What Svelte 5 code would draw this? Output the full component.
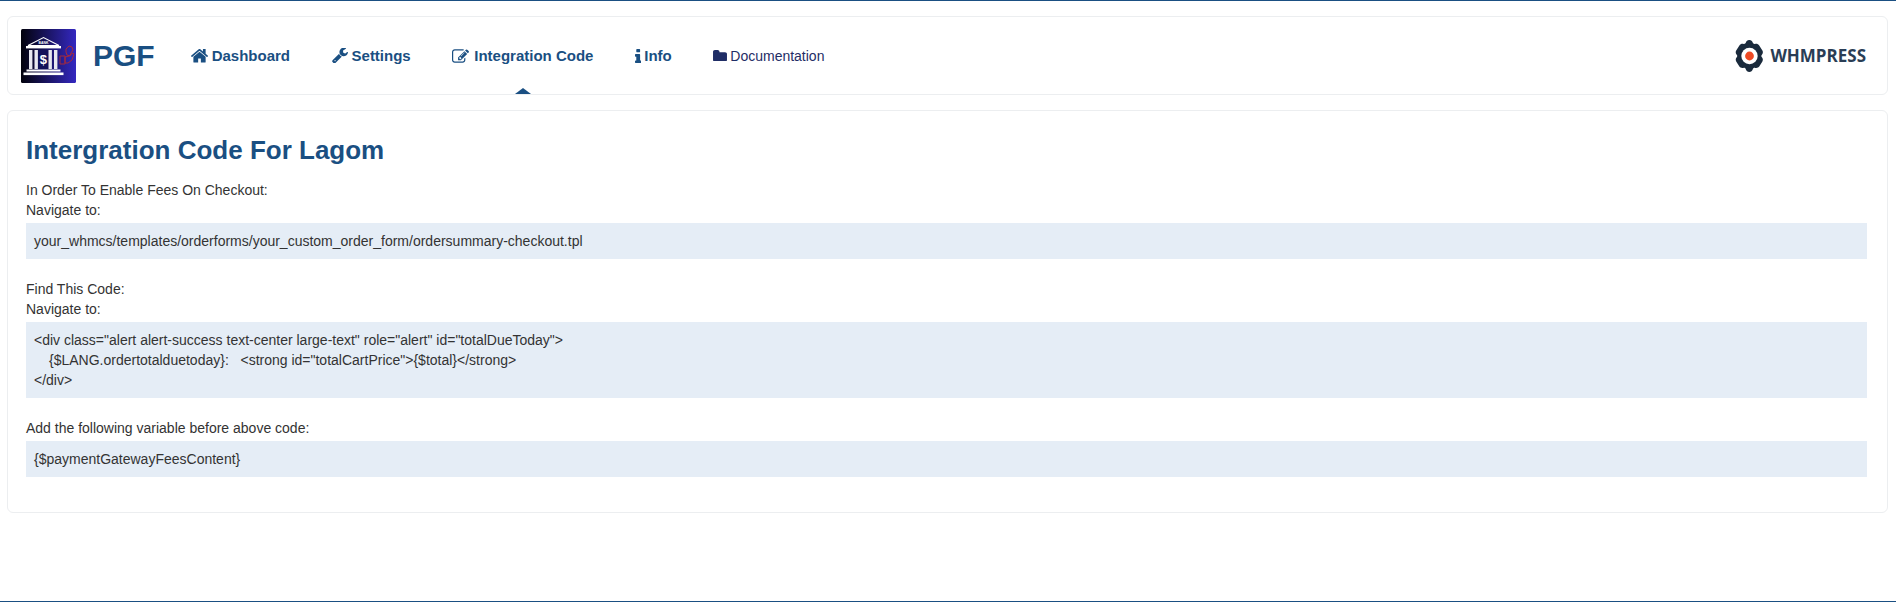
<script>
  const links = [
    { label: 'Dashboard', vb: '95 290 1600 1246', w: 17, h: 14, gap: 4, d: 'M1472 992v480q0 26-19 45t-45 19h-384v-384h-256v384h-384q-26 0-45-19t-19-45v-480q0-1 .5-3t.5-3l575-474 575 474q1 2 1 6zm223-69l-62 74q-8 9-21 11h-3q-13 0-21-7l-692-577-692 577q-12 8-24 7-13-2-21-11l-62-74q-8-10-7-23.5t11-21.5l719-599q32-26 76-26t76 26l244 204v-195q0-14 9-23t23-9h192q14 0 23 9t9 23v408l219 182q10 8 11 21.5t-7 23.5z' },
    { label: 'Settings', vb: '66 169 1660 1602', w: 16, h: 15.5, gap: 4, d: 'M448 1472q0-26-19-45t-45-19-45 19-19 45 19 45 45 19 45-19 19-45zm644-420l-682 682q-37 37-90 37-52 0-91-37l-106-108q-38-36-38-90 0-53 38-91l681-681q39 98 114.5 173.5t173.5 114.5zm634-435q0 39-23 106-47 134-164.5 217.5t-258.5 83.5q-185 0-316.5-131.5t-131.5-316.5 131.5-316.5 316.5-131.5q58 0 121.5 16.5t107.5 46.5q16 11 16 28t-16 28l-293 169v224l193 107q5-3 79-48.5t135.5-81 70.5-35.5q15 0 23.5 10t8.5 25z' },
    { label: 'Integration Code', vb: '0 128 1792 1408', w: 17, h: 14, gap: 5, active: true, d: 'M888 1184l116-116-152-152-116 116v56h96v96h56zm440-720q-16-16-33 1l-350 350q-17 17-1 33t33-1l350-350q17-17 1-33zm80 594v190q0 119-84.5 203.5t-203.5 84.5h-832q-119 0-203.5-84.5t-84.5-203.5v-832q0-119 84.5-203.5t203.5-84.5h832q63 0 117 25 15 7 18 23 3 17-9 29l-49 49q-14 14-32 8-23-6-45-6h-832q-66 0-113 47t-47 113v832q0 66 47 113t113 47h832q66 0 113-47t47-113v-126q0-13 9-22l64-64q15-15 35-7t20 29zm-96-738l288 288-672 672h-288v-288zm444 132l-92 92-288-288 92-92q28-28 68-28t68 28l152 152q28 28 28 68t-28 68z' },
    { label: 'Info', vb: '576 128 640 1408', w: 6.4, h: 14, gap: 3, d: 'M1216 1344v128q0 26-19 45t-45 19h-512q-26 0-45-19t-19-45v-128q0-26 19-45t45-19h64v-384h-64q-26 0-45-19t-19-45v-128q0-26 19-45t45-19h384q26 0 45 19t19 45v576h64q26 0 45 19t19 45zm-128-1152v192q0 26-19 45t-45 19h-256q-26 0-45-19t-19-45v-192q0-26 19-45t45-19h256q26 0 45 19t19 45z' },
    { label: 'Documentation', vb: '64 128 1664 1408', w: 14, h: 11.8, gap: 3, plain: true, d: 'M1728 608v704q0 92-66 158t-158 66h-1216q-92 0-158-66t-66-158v-960q0-92 66-158t158-66h320q92 0 158 66t66 158v32h672q92 0 158 66t66 158z' }
  ];
</script>

<div class="page">
  <header class="topbar">
    <svg class="logo" viewBox="0 0 55 54" aria-hidden="true">
      <defs>
        <linearGradient id="bg" x1="0" x2="1" y1="0" y2="0">
          <stop offset="0" stop-color="#02020c" />
          <stop offset="1" stop-color="#3428c0" />
        </linearGradient>
      </defs>
      <rect width="55" height="54" rx="1.5" fill="url(#bg)" />
      <rect x="14" y="21" width="17" height="21" fill="#12125a" />
      <path d="M7 16.5 L22.5 8.5 L38 16.5 Z" fill="none" stroke="#fff" stroke-width="1.1" />
      <text x="22.5" y="15" class="bank">BANK</text>
      <rect x="5" y="17" width="35" height="2.4" fill="#fff" />
      <rect x="8" y="21" width="3.4" height="19" fill="#e8e8f0" />
      <rect x="13.5" y="21" width="3.4" height="19" fill="#e8e8f0" />
      <rect x="27.5" y="21" width="3.4" height="19" fill="#e8e8f0" />
      <rect x="33" y="21" width="3.4" height="19" fill="#e8e8f0" />
      <rect x="5.5" y="40.5" width="34" height="2" fill="#fff" />
      <rect x="2.5" y="43.5" width="40" height="2.6" fill="#fff" />
      <text x="22.3" y="35" class="dollar">$</text>
      <path d="M39 27h5v8h-5zM44 28l4-1 4-3 1 1-2 6-4 3-3 0zM45 20l3-3 3 1 1 3-2 3-1 3-3-1-1-3z" fill="none" stroke="#a52a3c" stroke-width="1" />
    </svg>
    <div class="brand">PGF</div>
    <nav>
      {#each links as l}
        <a href="#top" class="link" class:plain={l.plain} class:active={l.active} style="gap:{l.gap}px">
          <svg class="icon" viewBox={l.vb} width={l.w} height={l.h} aria-hidden="true"><path d={l.d} /></svg>
          <span>{l.label}</span>
        </a>
      {/each}
    </nav>
    <div class="whm">
      <svg class="gear" viewBox="0 0 29 32" aria-hidden="true">
        <path fill-rule="evenodd" fill="#1a2a3c" d="M14.5 0c1.6 0 2.8 1 3.2 2.5c.3 1 1.2 1.6 2.3 1.4c1.6-.4 3.3.1 4.2 1.5l3.2 5.2c.8 1.3.6 3-.5 4.1c-.7.7-.7 1.9 0 2.6c1.1 1.1 1.3 2.8.5 4.1l-3 4.9c-.9 1.4-2.6 2-4.2 1.6c-1.1-.3-2.1.3-2.4 1.3c-.4 1.5-1.8 2.7-3.5 2.7s-3.1-1.2-3.5-2.7c-.3-1-1.3-1.6-2.4-1.3c-1.6.4-3.3-.2-4.2-1.6l-3-4.9c-.8-1.3-.6-3 .5-4.1c.7-.7.7-1.9 0-2.6c-1.1-1.1-1.3-2.8-.5-4.1l3.2-5.2c.9-1.4 2.6-1.9 4.2-1.5c1.1.2 2 -.4 2.3-1.4c.4-1.5 1.6-2.5 3.2-2.5z" />
        <circle cx="14.5" cy="16" r="8.2" fill="#fff" />
        <circle cx="14.5" cy="16" r="4.4" fill="#ee4a24" />
      </svg>
      <span>WHMPRESS</span>
    </div>
  </header>

  <main class="card">
    <h1>Intergration Code For Lagom</h1>
    <p>In Order To Enable Fees On Checkout:</p>
    <p>Navigate to:</p>
    <div class="code">your_whmcs/templates/orderforms/your_custom_order_form/ordersummary-checkout.tpl</div>
    <p class="spaced">Find This Code:</p>
    <p>Navigate to:</p>
    <div class="code">
      <div>&lt;div class="alert alert-success text-center large-text" role="alert" id="totalDueToday"&gt;</div>
      <div class="indent">&#123;$LANG.ordertotalduetoday&#125;: &nbsp; &lt;strong id="totalCartPrice"&gt;&#123;$total&#125;&lt;/strong&gt;</div>
      <div>&lt;/div&gt;</div>
    </div>
    <p class="spaced">Add the following variable before above code:</p>
    <div class="code">&#123;$paymentGatewayFeesContent&#125;</div>
  </main>
</div>

<style>
  :global(body) {
    margin: 0;
    background: #fff;
  }
  .page {
    box-sizing: border-box;
    height: 602px;
    padding: 15px 8px 0 7px;
    border-top: 1px solid #1a4f82;
    border-bottom: 1px solid #1a4f82;
    font-family: "Liberation Sans", Arial, sans-serif;
    color: #333;
    overflow: hidden;
  }
  .topbar {
    box-sizing: border-box;
    height: 79px;
    display: flex;
    align-items: center;
    padding: 0 21px 0 13px;
    border: 1px solid #eceef0;
    border-radius: 6px;
    margin-bottom: 15px;
  }
  .logo {
    width: 55px;
    height: 54px;
    flex: none;
  }
  .bank {
    font-family: "Liberation Sans", sans-serif;
    font-size: 3.4px;
    font-weight: 700;
    fill: #fff;
    text-anchor: middle;
  }
  .dollar {
    font-family: "Liberation Sans", sans-serif;
    font-size: 13px;
    font-weight: 700;
    fill: #fff;
    text-anchor: middle;
  }
  .brand {
    margin-left: 17px;
    font-size: 30px;
    font-weight: 700;
    color: #1a4f82;
    line-height: 1;
  }
  nav {
    display: flex;
    gap: 41.5px;
    margin-left: 36px;
    flex: 1;
  }
  .link {
    position: relative;
    display: flex;
    align-items: center;
    font-size: 15px;
    font-weight: 700;
    color: #1a4f82;
    text-decoration: none;
  }
  .link.plain {
    font-size: 14px;
    font-weight: 400;
    color: #1f2d66;
  }
  .icon {
    fill: currentColor;
    flex: none;
  }
  .active::after {
    content: "";
    position: absolute;
    left: 50%;
    margin-left: -8px;
    top: 41px;
    width: 0;
    height: 0;
    border-left: 8px solid transparent;
    border-right: 8px solid transparent;
    border-bottom: 6px solid #1a4f82;
  }
  .whm {
    display: flex;
    align-items: center;
    gap: 6px;
    font-family: "Open Sans", "Liberation Sans", sans-serif;
    font-weight: 700;
    font-size: 17px;
    color: #2a3d55;
  }
  .gear {
    width: 29px;
    height: 32px;
  }
  .card {
    box-sizing: border-box;
    height: 403px;
    padding: 22px 20px 0 18px;
    border: 1px solid #eceef0;
    border-radius: 6px;
  }
  h1 {
    margin: 0 0 13px;
    font-size: 26px;
    line-height: 34px;
    font-weight: 700;
    color: #1a4f82;
  }
  p {
    margin: 0;
    font-size: 14px;
    line-height: 20px;
  }
  .spaced {
    margin-top: 20px;
  }
  .code {
    padding: 8px;
    margin-top: 3px;
    background: #e5edf6;
    font-size: 14px;
    line-height: 20px;
  }
  .indent {
    padding-left: 15px;
  }
</style>
